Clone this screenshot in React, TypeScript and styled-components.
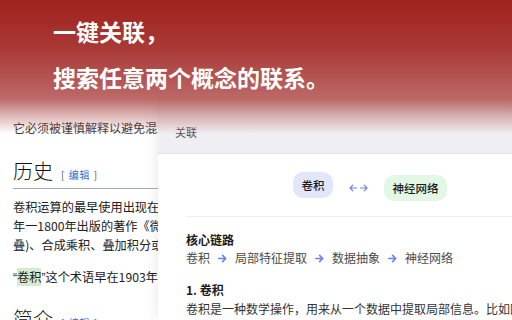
import React from 'react';
import styled, { createGlobalStyle } from 'styled-components';

const GlobalStyle = createGlobalStyle`
  html, body {
    margin: 0;
    padding: 0;
    background: #ffffff;
  }
  body {
    font-family: 'Noto Sans CJK SC', 'Noto Sans', sans-serif;
  }
`;

const Stage = styled.div`
  position: relative;
  width: 512px;
  height: 320px;
  overflow: hidden;
  background: #ffffff;
`;

const Article = styled.div`
  padding: 119px 0 0 13px;
  width: 300px;
  color: #202122;
`;

const Lead = styled.p`
  margin: 0;
  font-size: 12px;
  line-height: 18px;
  color: #3a3a3a;
  white-space: nowrap;
`;

const SectionTitle = styled.h2<{ $gap?: number }>`
  display: flex;
  align-items: baseline;
  gap: 8px;
  margin: ${({ $gap }) => $gap ?? 21}px 0 0;
  padding-bottom: 0;
  border-bottom: 1px solid #a2a9b1;
  font-size: 20px;
  font-weight: 300;
  line-height: 26px;
  color: #111;
`;

const EditLink = styled.span`
  font-size: 10px;
  font-weight: 400;
  color: #54595d;
  letter-spacing: 1px;

  b {
    color: #3366cc;
    font-weight: 400;
  }
`;

const Para = styled.p<{ $gap?: number }>`
  margin: ${({ $gap }) => $gap ?? 8}px 0 0;
  font-size: 12.2px;
  line-height: 19px;
  white-space: nowrap;
  color: #202122;
`;

const Quote = styled.span`
  font-family: 'Liberation Sans', sans-serif;
`;

const Mark = styled.span`
  background: #d4ebcf;
`;

const SidePanel = styled.aside`
  position: absolute;
  left: 158px;
  top: 96px;
  width: 424px;
  bottom: 0;
  display: flex;
  flex-direction: column;
  background: #ffffff;
  box-shadow: -4px 0 10px rgba(0, 0, 0, 0.06);
`;

const PanelHeader = styled.div`
  height: 58px;
  display: flex;
  align-items: flex-end;
  padding: 0 0 13px 17px;
  box-sizing: border-box;
  background: #efeff3;
  border-bottom: 1px solid #e2e2e6;
  font-size: 11px;
  color: #555560;
`;

const PanelBody = styled.div`
  padding: 18px 0 0 28px;
`;

const PairRow = styled.div`
  display: flex;
  align-items: flex-start;
  justify-content: center;
  gap: 16px;
  width: 368px;
  padding-bottom: 15px;
  border-bottom: 1px solid #efefef;
`;

const Chip = styled.span<{ $tone: 'blue' | 'green'; $drop?: number }>`
  display: inline-flex;
  align-items: center;
  height: 26px;
  padding: 0 8.5px;
  margin-top: ${({ $drop }) => $drop || 0}px;
  border-radius: 10px;
  font-size: 11.5px;
  font-weight: 500;
  color: #1a1a1a;
  background: ${({ $tone }) => ($tone === 'blue' ? '#e2e6fb' : '#e2f8e5')};
`;

const Swap = styled.svg`
  margin-top: 12px;
  flex: none;
`;

const Label = styled.div<{ $gap?: number }>`
  margin-top: ${({ $gap }) => $gap || 0}px;
  font-size: 12px;
  font-weight: 700;
  line-height: 18px;
  color: #1c1c1c;
`;

const Chain = styled.div`
  display: flex;
  align-items: center;
  gap: 7px;
  font-size: 12px;
  line-height: 18px;
  color: #4a4a4a;
  white-space: nowrap;
`;

const ArrowIcon = styled.svg`
  flex: none;
  margin: 0 1px;
`;

const Body = styled.p`
  margin: 1px 0 0;
  font-size: 12px;
  line-height: 18px;
  color: #333;
  white-space: nowrap;
`;

const Banner = styled.div`
  position: absolute;
  left: 0;
  top: 0;
  right: 0;
  height: 134px;
  padding: 8px 0 0 53px;
  box-sizing: border-box;
  pointer-events: none;
  background: linear-gradient(
    to bottom,
    rgba(160, 33, 29, 1) 0%,
    rgba(164, 46, 42, 0.95) 35%,
    rgba(170, 62, 60, 0.86) 62%,
    rgba(172, 70, 68, 0.8) 74%,
    rgba(180, 90, 90, 0.45) 86%,
    rgba(200, 150, 150, 0) 100%
  );
`;

const Headline = styled.div`
  font-size: 23px;
  font-weight: 700;
  line-height: 46px;
  color: #ffffff;
  white-space: nowrap;
`;

const ACCENT = '#6a80ee';

function ChainArrow() {
  return (
    <ArrowIcon width="9" height="9" viewBox="0 0 9 9" fill="none">
      <path d="M0.8 4.5H7.6M4.6 1.4L7.7 4.5L4.6 7.6" stroke={ACCENT} strokeWidth="1.6" strokeLinecap="round" strokeLinejoin="round" />
    </ArrowIcon>
  );
}

function SwapArrows() {
  return (
    <Swap width="19" height="8" viewBox="0 0 19 8" fill="none">
      <path d="M1 4H7.5M3.8 1.2L1 4L3.8 6.8" stroke={ACCENT} strokeWidth="1.2" strokeLinecap="round" strokeLinejoin="round" />
      <path d="M11.5 4H18M15.2 1.2L18 4L15.2 6.8" stroke={ACCENT} strokeWidth="1.2" strokeLinecap="round" strokeLinejoin="round" />
    </Swap>
  );
}

const chain = ['卷积', '局部特征提取', '数据抽象', '神经网络'];

export default function App() {
  return (
    <>
      <GlobalStyle />
      <Stage>
        <Article>
          <Lead>它必须被谨慎解释以避免混淆，不同领域的定义也有差异。</Lead>
          <SectionTitle>
            历史
            <EditLink>
              [ <b>编辑</b> ]
            </EditLink>
          </SectionTitle>
          <Para $gap={9}>
            卷积运算的最早使用出现在达朗贝尔于1754年出版的
            <br />
            年一1800年出版的著作《微积分学》中，被称为
            <br />
            叠)、合成乘积、叠加积分或卡森积分等名称。
          </Para>
          <Para $gap={13}>
            <Quote>“</Quote>
            <Mark>卷积</Mark>
            <Quote>”</Quote>这个术语早在1903年就已出现。
          </Para>
          <SectionTitle $gap={18}>
            简介
            <EditLink>
              [ <b>编辑</b> ]
            </EditLink>
          </SectionTitle>
        </Article>

        <SidePanel>
          <PanelHeader>关联</PanelHeader>
          <PanelBody>
            <PairRow>
              <Chip $tone="blue">卷积</Chip>
              <SwapArrows />
              <Chip $tone="green" $drop={3}>
                神经网络
              </Chip>
            </PairRow>
            <Label $gap={14}>核心链路</Label>
            <Chain>
              {chain.map((step, i) => (
                <React.Fragment key={step}>
                  {i > 0 && <ChainArrow />}
                  <span>{step}</span>
                </React.Fragment>
              ))}
            </Chain>
            <Label $gap={14}>1. 卷积</Label>
            <Body>卷积是一种数学操作，用来从一个数据中提取局部信息。比如图像。</Body>
          </PanelBody>
        </SidePanel>

        <Banner>
          <Headline>一键关联，</Headline>
          <Headline>搜索任意两个概念的联系。</Headline>
        </Banner>
      </Stage>
    </>
  );
}
